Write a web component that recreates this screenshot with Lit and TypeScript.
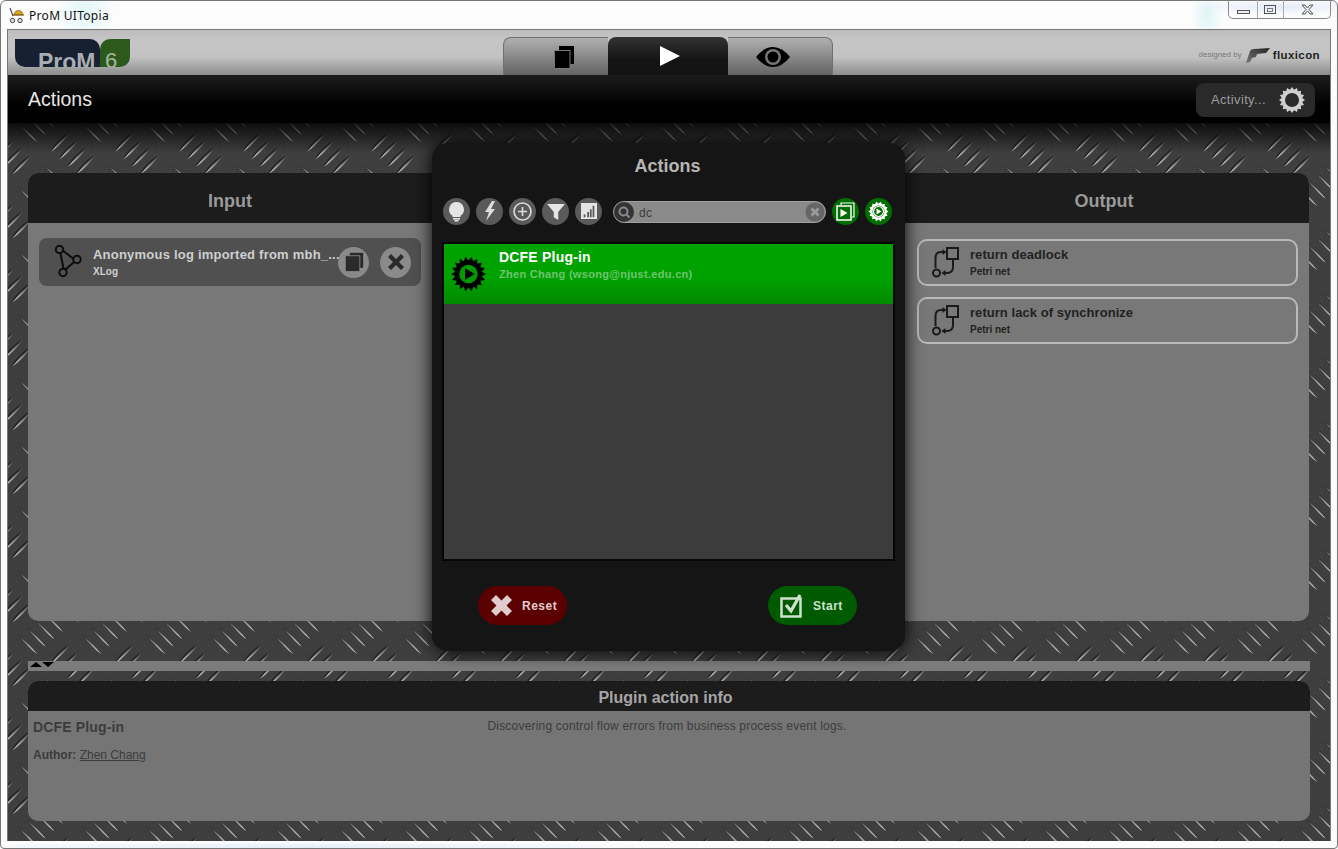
import { LitElement, html, css, unsafeCSS } from 'lit';
import { customElement } from 'lit/decorators.js';

// builds the toothed outline used by the gear icons
function gear(cx: number, cy: number, outer: number, inner: number, teeth: number) {
  const pts: string[] = [];
  for (let i = 0; i < teeth * 2; i++) {
    const r = i % 2 ? inner : outer;
    const a = (Math.PI * i) / teeth;
    pts.push(`${(cx + r * Math.cos(a)).toFixed(2)},${(cy + r * Math.sin(a)).toFixed(2)}`);
  }
  return pts.join(' ');
}

// thin lens between two points
function lens(x1: number, y1: number, x2: number, y2: number, w: number, fill: string, extra = '') {
  const mx = (x1 + x2) / 2, my = (y1 + y2) / 2;
  const dx = x2 - x1, dy = y2 - y1;
  const len = Math.hypot(dx, dy);
  const nx = (-dy / len) * w, ny = (dx / len) * w;
  return `<path d='M${x1} ${y1}Q${mx + nx} ${my + ny} ${x2} ${y2}Q${mx - nx} ${my - ny} ${x1} ${y1}z' fill='${fill}' ${extra}/>`;
}

// one tread mark: dark side and light side
function mark(x: number, y: number, dir: number) {
  const d = 9;
  const x1 = x - d, y1 = y + dir * d, x2 = x + d, y2 = y - dir * d;
  return (
    lens(x1 - 1, y1 - 1, x2 - 1, y2 - 1, 3, '%23161616', "opacity='.6'") +
    lens(x1, y1, x2, y2, 1.9, 'url(%23g)')
  );
}

function cluster(cx: number, cy: number, dir: number) {
  let out = '';
  for (let k = -1.5; k <= 1.5; k++) {
    out += mark(cx + k * 8.5, cy + dir * k * 7.5, dir);
  }
  return out;
}

const tile =
  `<svg xmlns='http://www.w3.org/2000/svg' width='64' height='64'>` +
  `<defs><linearGradient id='g' x1='0' y1='0' x2='0' y2='1'><stop offset='0' stop-color='%23555'/><stop offset='.55' stop-color='%23999'/><stop offset='1' stop-color='%23e0e0e0'/></linearGradient>` +
  `<filter id='n'><feTurbulence baseFrequency='.5' numOctaves='3' stitchTiles='stitch'/><feColorMatrix type='saturate' values='0'/></filter></defs>` +
  `<rect width='64' height='64' fill='%233d3d3d'/>` +
  `<rect width='64' height='64' filter='url(%23n)' opacity='.12'/>` +
  cluster(32, 32, 1) +
  cluster(0, 0, -1) + cluster(64, 0, -1) + cluster(0, 64, -1) + cluster(64, 64, -1) +
  `</svg>`;

@customElement('app-root')
export class AppRoot extends LitElement {
  static styles = css`
    :host {
      display: block;
      width: 1338px;
      height: 849px;
      font-family: 'Liberation Sans', Arial, sans-serif;
      overflow: hidden;
    }
    .window {
      box-sizing: border-box;
      height: 849px;
      display: flex;
      flex-direction: column;
      position: relative;
      border: 1px solid #777;
      border-radius: 6px 6px 4px 4px;
      background:
        radial-gradient(ellipse 30px 40px at 84px 10px, #e2f6f8, transparent),
        radial-gradient(ellipse 16px 30px at 1206px 14px, #dff4f7, transparent),
        radial-gradient(ellipse 90px 8px at 1280px 6px, #e4eaf6, transparent),
        radial-gradient(ellipse 400px 5px at 300px 846px, #e4eef8, transparent),
        #fcfcfc;
      padding: 0 6px 7px 6px;
    }

    /* title bar */
    .titlebar {
      height: 28px;
      flex: none;
      display: flex;
      align-items: center;
      gap: 4px;
      padding-left: 1px;
      font-family: 'Noto Sans', sans-serif;
      font-size: 12px;
      letter-spacing: .3px;
      color: #111;
    }
    .controls {
      position: absolute;
      top: -1px;
      right: 6px;
      width: 103px;
      height: 19px;
      box-sizing: border-box;
      border: 1px solid #8a8a8a;
      border-top: none;
      border-radius: 0 0 5px 5px;
      display: flex;
      align-items: center;
    }
    .controls svg { display: block; }

    /* app */
    .app {
      flex: 1;
      min-height: 0;
      display: flex;
      flex-direction: column;
      border: 1px solid #777;
      border-width: 1px 1px 0 1px;
    }
    .topbar {
      height: 45px;
      flex: none;
      display: grid;
      grid-template-columns: 1fr auto 1fr;
      background: linear-gradient(#bdbdbd, #c6c6c6 25%, #c2c2c2 60%, #8d8d8d);
    }
    .logo {
      align-self: end;
      margin: 0 0 8px 7px;
      width: 115px;
      height: 28px;
      display: flex;
    }
    .logo-main {
      width: 85px;
      overflow: hidden;
      background: #172030;
      border-radius: 0 10px 0 10px;
      color: #a9adb2;
      font-size: 23px;
      font-weight: bold;
      line-height: 24px;
      padding-top: 11px;
      box-sizing: border-box;
      padding-left: 23px;
      white-space: nowrap;
    }
    .logo-six {
      width: 30px;
      overflow: hidden;
      background: #2c5a1c;
      border-radius: 10px 0 10px 0;
      color: #a8b8a0;
      font-size: 22px;
      line-height: 24px;
      padding: 10px 0 0 5px;
      box-sizing: border-box;
    }
    .tabs {
      align-self: end;
      display: flex;
      margin-right: 2px;
    }
    .tab {
      height: 38px;
      display: flex;
      align-items: center;
      justify-content: center;
      box-sizing: border-box;
      background: linear-gradient(#b0b0b0, #636363);
      border: 1px solid #707070;
      border-bottom: none;
    }
    .tab.first { width: 105px; border-radius: 8px 0 0 0; border-right: none; padding-left: 15px; }
    .tab.last { width: 105px; border-radius: 0 8px 0 0; border-left: none; padding-right: 14px; }
    .tab.active {
      width: 120px;
      border: none;
      border-radius: 8px 8px 0 0;
      padding-left: 4px;
      background: linear-gradient(#333, #141414 60%);
    }
    .brand {
      justify-self: end;
      display: flex;
      align-items: center;
      gap: 3px;
      margin: 4px 10px 0 0;
      color: #777;
      font-size: 8px;
    }
    .brand b {
      font-size: 11.5px;
      color: #222;
      letter-spacing: .4px;
    }
    .actionbar {
      height: 48px;
      flex: none;
      display: flex;
      align-items: center;
      justify-content: space-between;
      padding: 1px 15px 0 20px;
      box-sizing: border-box;
      background: linear-gradient(#1c1c1c, #000 65%);
      color: #e6e6e6;
      font-size: 19.5px;
    }
    .activity {
      width: 119px;
      height: 34px;
      box-sizing: border-box;
      border-radius: 8px;
      background: #2a2a2a;
      display: flex;
      align-items: center;
      justify-content: space-between;
      padding: 0 10px 0 15px;
      font-size: 13px;
      letter-spacing: .35px;
      color: #9c9c9c;
    }

    /* plate area */
    .plate {
      flex: 1;
      min-height: 0;
      display: flex;
      flex-direction: column;
      padding: 20px;
      background:
        linear-gradient(rgba(0, 0, 0, .8), transparent 30px),
        url("data:image/svg+xml,${unsafeCSS(tile)}") -31px -1px;
    }
    .columns {
      height: 508px;
      flex: none;
      display: flex;
      padding-right: 1px;
    }
    .panel {
      flex: 1;
      margin: 30px 0;
      border-radius: 10px 0 0 10px;
      overflow: hidden;
      background: #787878;
    }
    .panel.output { border-radius: 0 10px 10px 0; }
    .panel-title {
      height: 50px;
      box-sizing: border-box;
      padding-top: 7px;
      display: flex;
      align-items: center;
      justify-content: center;
      background: #1c1c1c;
      color: #9a9a9a;
      font-size: 18px;
      font-weight: bold;
    }
    .output .panel-title { padding-right: 6px; }
    .panel-body { padding: 15px 11px; }
    .output .panel-body { padding: 16px 11px 0 12px; }

    .log-row {
      height: 48px;
      display: flex;
      align-items: center;
      background: #505050;
      border-radius: 8px;
      padding-left: 14px;
    }
    .net-row {
      height: 47px;
      box-sizing: border-box;
      display: flex;
      align-items: center;
      border: 2px solid #b9b9b9;
      border-radius: 10px;
      padding-left: 13px;
      margin-bottom: 11px;
      color: #222;
    }
    .row-icon { flex: none; width: 40px; display: block; }
    .net-row .row-icon { width: 38px; }
    .row-text { flex: 1; min-width: 0; padding-top: 1px; }
    .net-row .row-text { padding-top: 0; margin-top: -1px; }
    .row-title {
      font-size: 13px;
      font-weight: bold;
      line-height: 16px;
      white-space: nowrap;
      letter-spacing: .22px;
    }
    .net-row .row-title { letter-spacing: .05px; }
    .row-sub {
      font-size: 10px;
      font-weight: bold;
      line-height: 13px;
      margin-top: 2px;
    }
    .log-row .row-title, .log-row .row-sub { color: #cfcfcf; }
    .round {
      flex: none;
      width: 31px;
      height: 31px;
      border-radius: 50%;
      background: #8a8a8a;
      display: flex;
      align-items: center;
      justify-content: center;
      margin-right: 9px;
    }
    .round + .round { margin-right: 10px; margin-left: 2px; }

    /* dialog in the middle */
    .dialog {
      flex: none;
      width: 473px;
      box-sizing: border-box;
      position: relative;
      z-index: 1;
      padding: 12px 10px 0;
      border-radius: 16px;
      background: #151515;
      box-shadow: 0 0 18px #000;
      display: flex;
      flex-direction: column;
    }
    .dialog h2 {
      margin: 0 2px 0 0;
      height: 22px;
      line-height: 22px;
      text-align: center;
      font-size: 18px;
      color: #b5b5b5;
    }
    .toolbar {
      height: 28px;
      margin: 20px 1px 0;
      display: flex;
      align-items: center;
      gap: 6px;
    }
    .tool {
      flex: none;
      width: 27px;
      height: 27px;
      border-radius: 50%;
      background: #5a5a5a;
      display: flex;
      align-items: center;
      justify-content: center;
    }
    .tool.green { background: #006e00; }
    .search {
      flex: none;
      width: 213px;
      height: 22px;
      box-sizing: border-box;
      margin: 2px 0 0 5px;
      border: 1px solid #a0a0a0;
      border-radius: 11px;
      background: #8a8a8a;
      display: flex;
      align-items: center;
      color: #3c3c3c;
      font-size: 12px;
      letter-spacing: .3px;
    }
    .search span { flex: 1; padding: 1px 0 0 5px; }
    .search svg { flex: none; display: block; }
    .list {
      height: 319px;
      margin-top: 17px;
      box-sizing: border-box;
      border: 2px solid #050505;
      background: #3c3c3c;
    }
    .plugin {
      height: 60px;
      box-sizing: border-box;
      display: flex;
      background: linear-gradient(#00a200 55%, #008a00);
      padding: 5px 0 0 7px;
    }
    .plugin svg { flex: none; margin-top: 7px; margin-right: 13px; }
    .plugin-name {
      color: #fff;
      font-size: 14px;
      font-weight: bold;
      line-height: 17px;
      letter-spacing: .2px;
    }
    .plugin-author {
      color: #6fc46f;
      font-size: 11px;
      font-weight: bold;
      line-height: 14px;
      letter-spacing: .3px;
      margin-top: 1px;
    }
    .footer {
      margin-top: 25px;
      padding: 0 38px 0 36px;
      display: flex;
      justify-content: space-between;
    }
    .btn {
      width: 89px;
      height: 39px;
      box-sizing: border-box;
      border-radius: 20px;
      display: flex;
      align-items: center;
      gap: 9px;
      padding-left: 12px;
      font-size: 12px;
      font-weight: bold;
      letter-spacing: .5px;
    }
    .btn.reset { background: #5a0000; color: #e0cccc; }
    .btn.start { background: #005a00; color: #cfe2cf; }

    /* lower part */
    .splitter {
      height: 10px;
      flex: none;
      margin-top: 10px;
      background: #7c7c7c;
      display: flex;
      align-items: flex-start;
      padding-left: 1px;
    }
    .info {
      height: 140px;
      flex: none;
      margin-top: 10px;
      border-radius: 10px;
      overflow: hidden;
      background: #757575;
    }
    .info-title {
      height: 30px;
      box-sizing: border-box;
      padding: 3px 7px 0 0;
      display: flex;
      align-items: center;
      justify-content: center;
      background: #1c1c1c;
      color: #a5a5a5;
      font-size: 16px;
      font-weight: bold;
    }
    .info-body {
      display: grid;
      grid-template-columns: 1fr auto 1fr;
      padding: 8px 5px 0;
      color: #3c3c3c;
    }
    .info-name { font-size: 14px; font-weight: bold; line-height: 16px; letter-spacing: .15px; }
    .info-author { font-size: 12px; line-height: 14px; margin-top: 13px; }
    .info-author a { color: inherit; text-decoration: underline; }
    .info-desc { font-size: 12px; line-height: 14px; letter-spacing: .2px; margin-right: 4px; }
  `;

  private copyIcon(size: number, color: string, gap: string) {
    return html`<svg width=${size} height=${size} viewBox="0 0 24 24">
      <rect x="7" y="1" width="16" height="18" fill=${color}></rect>
      <rect x="1.500" y="4.500" width="17.500" height="19" fill=${color} stroke=${gap}></rect>
    </svg>`;
  }

  private petriIcon() {
    return html`<svg class="row-icon" width="38" height="34" viewBox="0 0 38 34" fill="none" stroke="#1a1a1a" stroke-width="2">
      <rect x="15" y="2" width="11" height="11"></rect>
      <circle cx="4.500" cy="27" r="3.500"></circle>
      <path d="M3.500 22V12Q3.500 6 9 6H11"></path>
      <path d="M10.500 3l4 3-4 3z" fill="#1a1a1a" stroke="none"></path>
      <path d="M21 13V21Q21 27 15 27H13"></path>
      <path d="M13.500 24l-4 3 4 3z" fill="#1a1a1a" stroke="none"></path>
    </svg>`;
  }

  render() {
    return html`
      <div class="window">
        <div class="titlebar">
          <svg width="17" height="17" viewBox="0 0 17 17">
            <path d="M6 8a4.500 4.500 0 0 1 9 0z" fill="#d9a520" stroke="#7a5a10" stroke-width=".7"></path>
            <path d="M5 8h11" stroke="#7a5a10" stroke-width="1"></path>
            <path d="M2 1l3 8" stroke="#444" stroke-width="1.200"></path>
            <circle cx="4.500" cy="13.500" r="2.200" fill="#ddd" stroke="#444"></circle>
            <circle cx="12" cy="13.500" r="2.200" fill="#ddd" stroke="#444"></circle>
          </svg>
          ProM UITopia
        </div>
        <div class="controls">
          <svg width="101" height="18" viewBox="0 0 101 18" fill="none">
            <line x1="28.500" y1="0" x2="28.500" y2="18" stroke="#aaa"></line>
            <line x1="54.500" y1="0" x2="54.500" y2="18" stroke="#aaa"></line>
            <rect x="8.500" y="10.500" width="12" height="3" fill="#eee" stroke="#555"></rect>
            <rect x="35.500" y="5.500" width="11" height="8" stroke="#555"></rect>
            <rect x="38.500" y="8.500" width="5" height="3" stroke="#777"></rect>
            <path d="M73 5h3l2.500 3L81 5h3l-4 4.500 4 4.500h-3l-2.500-3L76 14h-3l4-4.500z" fill="#eee" stroke="#555"></path>
          </svg>
        </div>

        <div class="app">
          <div class="topbar">
            <div class="logo">
              <div class="logo-main">ProM</div>
              <div class="logo-six">6</div>
            </div>
            <div class="tabs">
              <div class="tab first">
                <svg width="22" height="24" viewBox="0 0 22 24">
                  <rect x="6" y="1" width="15" height="18" fill="#000"></rect>
                  <rect x="1.500" y="5.500" width="15.500" height="18" fill="#000" stroke="#777"></rect>
                </svg>
              </div>
              <div class="tab active">
                <svg width="22" height="22" viewBox="0 0 22 22"><path d="M1 1l20 10L1 21z" fill="#fff"></path></svg>
              </div>
              <div class="tab last">
                <svg width="36" height="22" viewBox="0 0 36 22">
                  <path d="M1 11Q9 1 18 1T35 11Q27 21 18 21T1 11z" fill="#000"></path>
                  <circle cx="18" cy="11" r="8" fill="#777"></circle>
                  <circle cx="18" cy="11" r="5.500" fill="#000"></circle>
                </svg>
              </div>
            </div>
            <div class="brand">
              designed by
              <svg width="25" height="16" viewBox="0 0 25 16">
                <defs>
                  <linearGradient id="sw" x1="0" y1="1" x2="1" y2="0">
                    <stop offset="0" stop-color="#777"></stop>
                    <stop offset="1" stop-color="#222"></stop>
                  </linearGradient>
                </defs>
                <path d="M1 16L5 4Q6 2 9 2L25 1 21 6 12 7 11 10 7 11 5 15z" fill="url(#sw)"></path>
              </svg>
              <b>fluxicon</b>
            </div>
          </div>

          <div class="actionbar">
            Actions
            <div class="activity">
              Activity...
              <svg width="26" height="26" viewBox="0 0 26 26">
                <polygon points=${gear(13, 13, 13, 10.5, 16)} fill="#cfcfcf"></polygon>
                <circle cx="13" cy="13" r="7" fill="#2a2a2a"></circle>
              </svg>
            </div>
          </div>

          <div class="plate">
            <div class="columns">
              <section class="panel">
                <div class="panel-title">Input</div>
                <div class="panel-body">
                  <div class="log-row">
                    <svg class="row-icon" width="40" height="34" viewBox="0 0 40 34" fill="none" stroke="#0c0c0c" stroke-width="2">
                      <path d="M7 6L11 26M9 5L22 15M12 25L21 17"></path>
                      <circle cx="6.500" cy="4.500" r="3.700" fill="#505050"></circle>
                      <circle cx="24" cy="14.500" r="3.700" fill="#505050"></circle>
                      <circle cx="10" cy="27.500" r="3.700" fill="#505050"></circle>
                    </svg>
                    <div class="row-text">
                      <div class="row-title">Anonymous log imported from mbh_...</div>
                      <div class="row-sub">XLog</div>
                    </div>
                    <div class="round">${this.copyIcon(20, '#2a2a2a', '#8a8a8a')}</div>
                    <div class="round">
                      <svg width="20" height="20" viewBox="0 0 20 20"><path d="M2 5l3-3 5 5 5-5 3 3-5 5 5 5-3 3-5-5-5 5-3-3 5-5z" fill="#2a2a2a"></path></svg>
                    </div>
                  </div>
                </div>
              </section>

              <section class="dialog">
                <h2>Actions</h2>
                <div class="toolbar">
                  <div class="tool">
                    <svg width="19" height="21" viewBox="0 0 19 21" fill="#e4e4e4">
                      <path d="M9.500 1a7.500 7.500 0 0 1 4 13.800V16h-8v-1.200A7.500 7.500 0 0 1 9.500 1z"></path>
                      <rect x="6" y="17" width="7" height="1.600"></rect>
                      <rect x="7.500" y="19" width="4" height="1.500"></rect>
                    </svg>
                  </div>
                  <div class="tool">
                    <svg width="14" height="20" viewBox="0 0 14 20"><path d="M9 0L2 11h4L3 20l9-12H8l4-8z" fill="#ddd"></path></svg>
                  </div>
                  <div class="tool">
                    <svg width="21" height="21" viewBox="0 0 21 21" fill="none" stroke="#ddd">
                      <circle cx="10.500" cy="10.500" r="8.500" stroke-width="1.600"></circle>
                      <path d="M10.500 6v9M6 10.500h9" stroke-width="1.600"></path>
                    </svg>
                  </div>
                  <div class="tool">
                    <svg width="18" height="17" viewBox="0 0 20 19"><path d="M0 1h20l-7.500 9v9l-5-3v-6z" fill="#e4e4e4"></path></svg>
                  </div>
                  <div class="tool">
                    <svg width="16" height="16" viewBox="0 0 18 18">
                      <path fill-rule="evenodd" d="M0 0h18v18H0zM3 13v3h2v-3zM7 10v6h2v-6zM10 7v9h2V7zM13 3v13h2V3z" fill="#e4e4e4"></path>
                    </svg>
                  </div>
                  <div class="search">
                    <svg width="20" height="20" viewBox="0 0 20 20" fill="none">
                      <circle cx="10" cy="10" r="10" fill="#333"></circle>
                      <circle cx="9.500" cy="9.500" r="4" stroke="#8a8a8a" stroke-width="2"></circle>
                      <path d="M12.500 12.500l3 3" stroke="#8a8a8a" stroke-width="2"></path>
                    </svg>
                    <span>dc</span>
                    <svg width="20" height="20" viewBox="0 0 20 20" fill="none">
                      <circle cx="10" cy="10" r="9.500" fill="#666"></circle>
                      <path d="M6.500 6.500l7 7M13.500 6.500l-7 7" stroke="#999" stroke-width="3"></path>
                    </svg>
                  </div>
                  <div class="tool green">
                    <svg width="19" height="19" viewBox="0 0 19 19" fill="none" stroke="#fff">
                      <path d="M5 3V1h13v14h-2" stroke-width="1.200"></path>
                      <rect x="1" y="4" width="14" height="14" stroke-width="1.500"></rect>
                      <path d="M4.500 7l7 4-7 4z" fill="#fff" stroke="none"></path>
                    </svg>
                  </div>
                  <div class="tool green">
                    <svg width="21" height="21" viewBox="0 0 21 21">
                      <polygon points=${gear(10.5, 10.5, 10, 8, 14)} fill="#fff"></polygon>
                      <circle cx="10.500" cy="10.500" r="6" fill="#006e00"></circle>
                      <circle cx="10.500" cy="10.500" r="5" fill="none" stroke="#fff" stroke-width="1.200"></circle>
                      <path d="M8.500 7.500l5 3-5 3z" fill="#fff"></path>
                    </svg>
                  </div>
                </div>

                <div class="list">
                  <div class="plugin">
                    <svg width="35" height="36" viewBox="0 0 36 36">
                      <polygon points=${gear(18, 18, 18, 14, 18)} fill="#000"></polygon>
                      <circle cx="18" cy="18" r="9.500" fill="#009a00"></circle>
                      <path d="M14.500 12l10 6-10 6z" fill="#000"></path>
                    </svg>
                    <div>
                      <div class="plugin-name">DCFE Plug-in</div>
                      <div class="plugin-author">Zhen Chang (wsong@njust.edu.cn)</div>
                    </div>
                  </div>
                </div>

                <div class="footer">
                  <div class="btn reset">
                    <svg width="23" height="23" viewBox="0 0 23 23"><path d="M1 6l5-5 5.500 5.500L17 1l5 5-5.500 5.500L22 17l-5 5-5.500-5.500L6 22l-5-5 5.500-5.500z" fill="#e0cccc"></path></svg>
                    Reset
                  </div>
                  <div class="btn start">
                    <svg width="24" height="24" viewBox="0 0 24 24" fill="none" stroke="#cfe2cf">
                      <rect x="1.500" y="4.500" width="19" height="18" stroke-width="2.500"></rect>
                      <path d="M6 11l5 6 9-16" stroke-width="3.200"></path>
                    </svg>
                    Start
                  </div>
                </div>
              </section>

              <section class="panel output">
                <div class="panel-title">Output</div>
                <div class="panel-body">
                  <div class="net-row">
                    ${this.petriIcon()}
                    <div class="row-text">
                      <div class="row-title">return deadlock</div>
                      <div class="row-sub">Petri net</div>
                    </div>
                  </div>
                  <div class="net-row">
                    ${this.petriIcon()}
                    <div class="row-text">
                      <div class="row-title">return lack of synchronize</div>
                      <div class="row-sub">Petri net</div>
                    </div>
                  </div>
                </div>
              </section>
            </div>

            <div class="splitter">
              <svg width="25" height="6" viewBox="0 0 25 6">
                <path d="M1 6l6-5 6 5zM13 1h12l-6 5z" fill="#000"></path>
              </svg>
            </div>

            <section class="info">
              <div class="info-title">Plugin action info</div>
              <div class="info-body">
                <div>
                  <div class="info-name">DCFE Plug-in</div>
                  <div class="info-author"><b>Author:</b> <a>Zhen Chang</a></div>
                </div>
                <div class="info-desc">Discovering control flow errors from business process event logs.</div>
                <div></div>
              </div>
            </section>
          </div>
        </div>
      </div>
    `;
  }
}
